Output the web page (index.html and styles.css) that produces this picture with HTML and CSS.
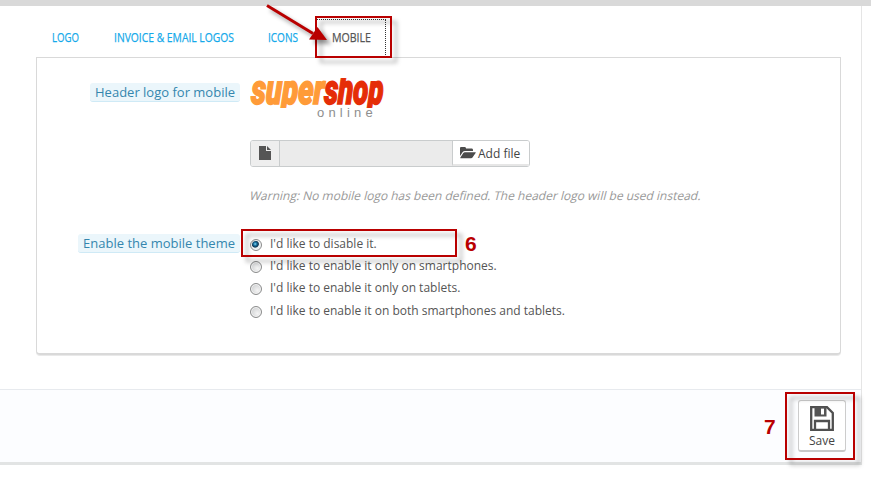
FILE: index.html
```html
<!DOCTYPE html>
<html lang="en">
<head>
<meta charset="utf-8">
<title>Theme settings</title>
<link rel="stylesheet" href="styles.css">
</head>
<body>
<div class="topbar"></div>
<main class="page">
  <nav class="tabs">
    <a class="tab"><svg width="27" height="20"><text x="0" y="12" textLength="27" lengthAdjust="spacingAndGlyphs">LOGO</text></svg></a>
    <a class="tab"><svg width="120" height="20"><text x="0" y="12" textLength="120" lengthAdjust="spacingAndGlyphs">INVOICE &amp; EMAIL LOGOS</text></svg></a>
    <a class="tab"><svg width="30" height="20"><text x="0" y="12" textLength="30" lengthAdjust="spacingAndGlyphs">ICONS</text></svg></a>
    <a class="tab active"><svg width="39" height="20"><text x="0" y="12" textLength="39" lengthAdjust="spacingAndGlyphs">MOBILE</text></svg></a>
  </nav>
  <section class="panel">
    <div class="row logo-row">
      <div class="label-col"><span class="label">Header logo for mobile</span></div>
      <div>
        <div class="logo">
          <svg class="brand" width="138" height="30">
            <g transform="translate(1 26) skewX(-2)">
              <text class="orange" x="0" y="0" textLength="73" lengthAdjust="spacingAndGlyphs">super</text>
              <text class="red" x="73" y="0" textLength="59" lengthAdjust="spacingAndGlyphs">shop</text>
            </g>
          </svg>
          <span class="online">online</span>
        </div>
        <div class="file">
          <span class="file-icon"><svg width="12" height="14" viewBox="0 0 12 14"><path d="M0 0H7V5H12V14H0ZM8 0L12 4H8Z"/></svg></span>
          <span class="file-name"></span>
          <span class="file-button"><svg width="16" height="12" viewBox="0 0 16 12"><path d="M0 9V1Q0 0 1 0H5Q6 0 6 1.500H12Q13 1.500 13 3V4H5Q3.500 4 2.700 5ZM4.800 5.200H15.500Q16 5.200 15.600 6L12.500 10.500Q12 11.300 11 11.300H.5Q0 11.300.4 10.500L3.300 6Q4 5.200 4.800 5.200Z"/></svg><span>Add file</span></span>
        </div>
        <p class="help">Warning: No mobile logo has been defined. The header logo will be used instead.</p>
      </div>
    </div>
    <div class="row theme-row">
      <div class="label-col"><span class="label">Enable the mobile theme</span></div>
      <div class="options">
        <div class="option"><i class="radio checked"></i><span>I'd like to disable it.</span></div>
        <div class="option"><i class="radio"></i><span>I'd like to enable it only on smartphones.</span></div>
        <div class="option"><i class="radio"></i><span>I'd like to enable it only on tablets.</span></div>
        <div class="option last"><i class="radio"></i><span>I'd like to enable it on both smartphones and tablets.</span></div>
      </div>
    </div>
  </section>
  <footer class="footer">
    <div class="save">
      <svg width="24" height="25" viewBox="0 0 24 25"><path class="line" d="M1.200 1.200H17L22.800 7V23.800H1.200ZM5 23V15H19V23"/><path d="M4.500 1H16.500V10.500H4.500ZM11 2.500V8.500H14V2.500Z" fill-rule="evenodd"/></svg>
      <span>Save</span>
    </div>
  </footer>
</main>
<div class="mark mark-tab"></div>
<div class="mark mark-option"></div>
<div class="mark mark-save"></div>
<svg class="arrow" width="80" height="60"><path d="M6 5.500L52 33.500" stroke="#b90000" stroke-width="3"/><path d="M66 40L48 39.500L56.500 27Z" fill="#b90000"/></svg>
<span class="num six">6</span>
<span class="num seven">7</span>
</body>
</html>
```
FILE: styles.css
```css
* { box-sizing: border-box; }
body { margin: 0; width: 871px; height: 477px; overflow: hidden; background: #fff; color: #555; font: 12px "Open Sans", sans-serif; position: relative; }
svg { display: block; }
.topbar { height: 6px; background: #d9d9d9; }
.page { width: 862px; height: 459px; border-right: 1px solid #e5e5e5; border-bottom: 3px solid #e2e4e4; display: flex; flex-direction: column; }
.tabs { height: 51px; padding: 13px 0 0 37px; display: flex; gap: 4px; flex: none; }
.tab { padding: 11px 15px 0; fill: #14a9ea; stroke: #14a9ea; stroke-width: .25; font: 13px/16px "Open Sans", sans-serif; }
.tab svg { overflow: visible; }
.tab + .tab { padding-left: 16px; padding-right: 14px; }
.tab.active { fill: #555; stroke: #555; border: 1px dotted #333; border-bottom: 0; padding: 10px 14px 0 15px; margin-left: -1px; }
.tab.tab.active { padding-left: 16px; }
.panel { width: 805px; height: 298px; margin-left: 36px; flex: none; border: 1px solid #d9d9d9; border-bottom-width: 2px; border-radius: 0 0 4px 4px; box-shadow: 0 1px 0 #e9e9e9; }
.row { display: flex; gap: 10px; }
.label-col { width: 203px; display: flex; justify-content: flex-end; align-items: flex-start; }
.label { height: 19px; padding: 0 5px; border-radius: 3px; background: #ebf6fb; border-bottom: 1px solid #cfeaf6; color: #3586ae; font-size: 13px; line-height: 18px; white-space: nowrap; }
.logo-row .label { margin-top: 25px; }
.logo { height: 62px; margin-top: 20px; display: flex; flex-direction: column; }
.brand { overflow: hidden; font: italic 900 42px Roboto, sans-serif; flex: none; }
.orange { fill: #ff9b38; stroke: #ff9b38; stroke-width: 1.6; }
.red { fill: #e52d07; stroke: #e52d07; stroke-width: 1.6; }
.online { margin: -3px 0 0 67px; font: 13px/16px "Liberation Sans", sans-serif; letter-spacing: 4.2px; color: #8e8e8e; }
.file { width: 280px; height: 27px; display: flex; border: 1px solid #c9cccd; border-radius: 3px; overflow: hidden; }
.file-icon { width: 29px; padding: 5px 0 0 8px; background: #eee; border-right: 1px solid #c9cccd; fill: #555; }
.file-name { flex: 1; background: #ebebeb; }
.file-button { width: 77px; display: flex; align-items: center; gap: 2px; padding-left: 7px; border-left: 1px solid #c9cccd; border-bottom: 2px solid #e6e6e6; background: #fff; fill: #4c4c4c; color: #444; }
.file-button span { padding-top: 2px; }
.help { margin: 20px 0 0; line-height: 18px; color: #999; white-space: nowrap; transform: skewX(-14deg); }
.theme-row { margin-top: 29px; }
.options { padding-top: 1px; }
.option { height: 22px; display: flex; gap: 8px; line-height: 18px; white-space: nowrap; }
.option.last { margin-top: 1px; }
.radio { width: 12px; height: 12px; margin-top: 4px; border: 1px solid #8b8c8c; border-radius: 50%; background: radial-gradient(circle at 65% 65%, #f4f4f4, #c4c6c8); box-shadow: inset 0 0 0 1px #f5f5f5; }
.radio.checked { background: radial-gradient(circle at 42% 40%, #8edcf5 0, #1c79a8 1.5px, #0c304c 3.2px, #e8eef1 4px); }
.footer { margin-top: 34px; border-top: 1px solid #e7eaee; background: #fcfdff; display: flex; justify-content: flex-end; padding: 10px 15px 0 0; flex: 1; }
.save { width: 48px; height: 52px; border: 1px solid #ccc; border-bottom: 2px solid #c8c8c8; border-radius: 3px; background: #fff; display: flex; flex-direction: column; align-items: center; padding-top: 5px; gap: 1px; fill: #555; color: #444; line-height: 18px; }
.line { fill: none; stroke: #4f4f4f; stroke-width: 2.3; }
.mark { position: absolute; border: 2px solid #b90000; filter: drop-shadow(5px 5px 2px rgba(0,0,0,.3)); }
.mark-tab { left: 315px; top: 16px; width: 77px; height: 42px; }
.mark-option { left: 241px; top: 229px; width: 216px; height: 28px; }
.mark-save { left: 785px; top: 392px; width: 70px; height: 68px; }
.arrow { position: absolute; left: 261px; top: 0; filter: drop-shadow(4px 4px 2px rgba(0,0,0,.4)); }
.num { position: absolute; color: #b90000; font: bold 21px/24px "Liberation Sans", sans-serif; }
.six { left: 465px; top: 232px; }
.seven { left: 764px; top: 415px; }
```
